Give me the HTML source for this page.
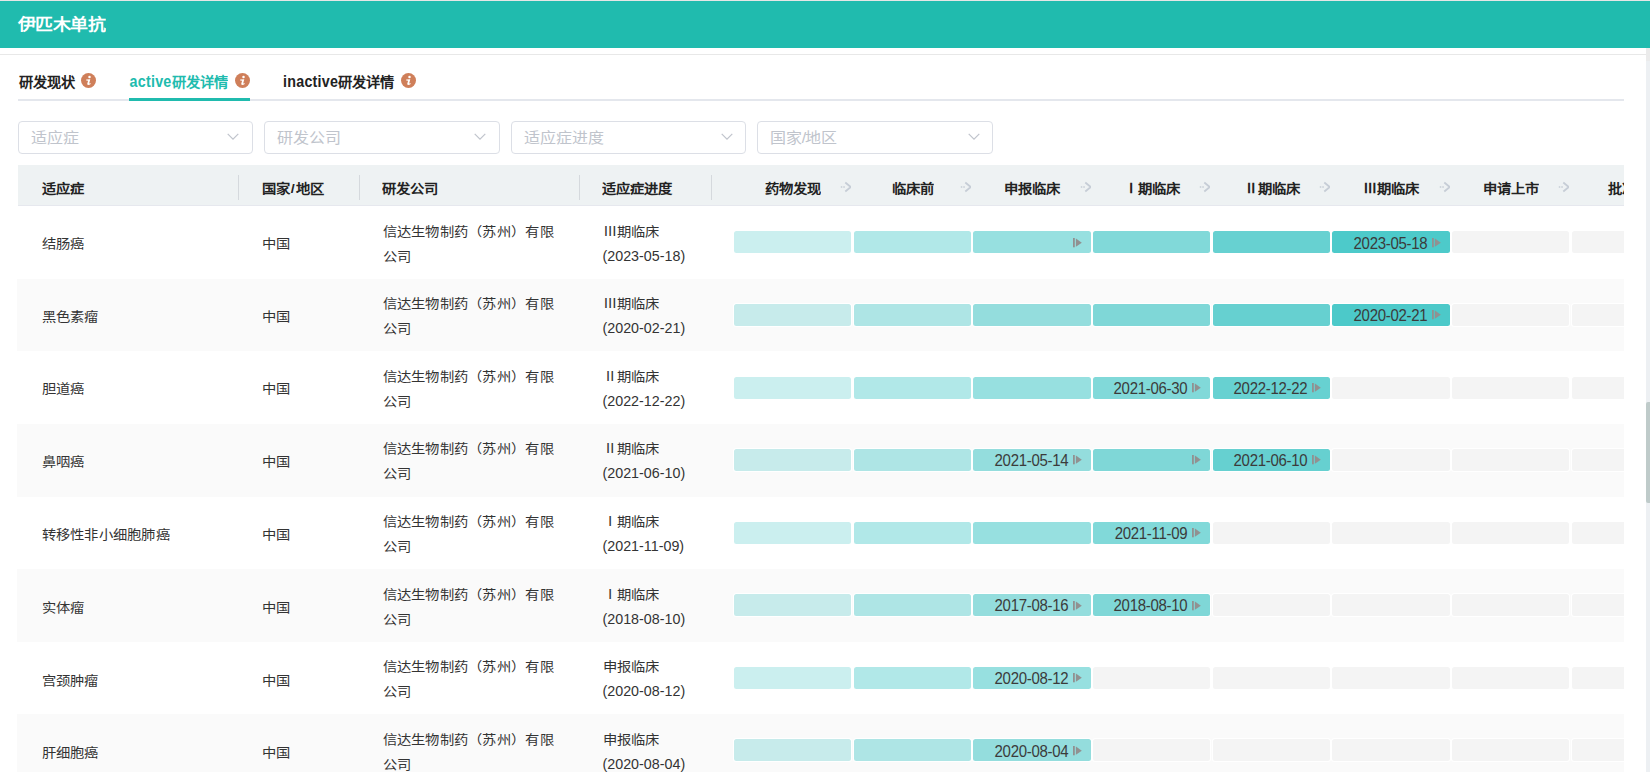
<!DOCTYPE html><html lang="zh-CN"><head><meta charset="utf-8"><style>*{box-sizing:border-box}
html,body{margin:0;padding:0;background:#fff;width:1650px;height:772px;overflow:hidden;font-family:"Liberation Sans",sans-serif;color:#333}
.topline{position:absolute;left:0;top:0;width:1650px;height:1px;background:#e6e6e6}
.hdr{position:absolute;left:0;top:1px;width:1650px;height:47px;background:#20bbae;color:#fff;font-weight:bold;font-size:18px}
.hdr span{position:absolute;left:17.8px;top:14px;line-height:20px;letter-spacing:-0.5px}
.l54{position:absolute;left:0;top:54px;width:1646px;height:1px;background:#e8e8e8}
.tabline{position:absolute;left:18px;top:99px;width:1606px;height:2px;background:#e4e7ed}
.tabact{position:absolute;left:129px;top:98px;width:121px;height:3px;background:#20bbae}
.tab{position:absolute;top:73.2px;font-size:14.3px;line-height:18px;font-weight:bold;color:#222;white-space:nowrap}
.tab b{font-weight:bold;letter-spacing:0.25px}
.t1{left:18.5px}.t2{left:129.5px;color:#20bbae}.t3{left:283px}
.info{position:absolute;top:72.9px}
.sel{position:absolute;top:121px;height:32.5px;border:1px solid #dcdfe6;border-radius:4px;background:#fff}
.sel span{position:absolute;left:12px;top:5.5px;font-size:16px;line-height:20px;color:#c0c4cc;white-space:nowrap}
.sl{font-style:normal;margin:0 1.3px}
.sel .sl{margin:0 -1px 0 -0.5px}
.sel .chev{position:absolute;right:12.5px;top:10.8px}
.tbl{position:absolute;left:17px;top:165px;width:1607px;height:607px;overflow:hidden}
.th{position:absolute;left:1px;top:0;width:1606px;height:41px;background:#eef2f3;border-bottom:1px solid #e6e8ee}
.hc{position:absolute;top:14.9px;font-size:14.3px;line-height:18px;font-weight:bold;color:#222;white-space:nowrap}
.dv{position:absolute;top:10px;width:1px;height:25px;background:#d5d9dd}
.gh{position:absolute;top:14.9px;height:18px;text-align:center;font-size:14.3px;line-height:18px;font-weight:bold;color:#222;white-space:nowrap}
.gh .arr{position:absolute;right:0;top:0.9px}
.row{position:absolute;left:0;width:1607px;height:72.57px;background:#fff}
.row.alt{background:#fafafa}
.c1,.c2{position:absolute;top:28.9px;font-size:14.3px;line-height:18px;white-space:nowrap}
.c1{left:24.5px;letter-spacing:0.28px}.c2{left:244.5px}
.c3,.c4{position:absolute;top:12.4px;font-size:14.3px;line-height:25px;white-space:nowrap}
.c3{left:365.5px;letter-spacing:0.28px}.c4{left:585.5px}
.bar{position:absolute;top:25.1px;height:22px;border-radius:2.5px;box-shadow:0 0 0 1px #fff;text-align:right;padding-right:22.7px;white-space:nowrap}
.b0{background:rgba(38,190,190,0.24)}
.b1{background:rgba(38,190,190,0.36)}
.b2{background:rgba(38,190,190,0.48)}
.b3{background:rgba(38,190,190,0.58)}
.b4{background:rgba(38,190,190,0.70)}
.b5{background:rgba(38,190,190,0.82)}
.be{background:#f4f4f4}
.dt{font-size:15px;line-height:22px;color:#3b3b3b;letter-spacing:-0.3px}
.play{position:absolute;right:8.8px;top:6.3px}
.sbtrack{position:absolute;left:1646px;top:48px;width:4px;height:724px;background:#edf0f3}
.sbtop{position:absolute;left:1646px;top:48px;width:4px;height:13px;background:#ebebeb}
.sbthumb{position:absolute;left:1646px;top:402px;width:4px;height:101px;border-radius:2px 0 0 2px;background:#bfcbca}

.sy{transform:scaleY(0.9)}
.hdr span,.tab,.sel span,.hc,.gh span,.c1,.c2,.c3>div,.c4>div:first-child{transform:scaleY(0.9)}
.gh span,.dt{display:inline-block}
.c4>div:last-child,.dt{transform:scaleY(1.07)}
.dt{display:inline-block;position:relative;top:1.2px}
.tab{transform:scaleY(0.93)}
.tab b{display:inline-block;transform:scaleY(1.2);position:relative;top:-1px}
</style></head><body>
<div class="topline"></div><div class="hdr"><span>伊匹木单抗</span></div><div class="l54"></div>
<div class="tabline"></div><div class="tabact"></div>
<div class="tab t1">研发现状</div><svg class="info" style="left:81px" width="15" height="15" viewBox="0 0 15 15"><circle cx="7.5" cy="7.5" r="7.5" fill="#cf7f5a"/><circle cx="8.5" cy="3.95" r="1.25" fill="#fff"/><path d="M5.2 6.6 L9.3 6.3 L8.2 10.2 Q8.1 10.9 9.7 10.1 L9.4 11.2 Q8.5 12 7.2 12 Q5.9 12 6.3 10.6 L7.1 7.7 Q6.4 7.5 5.2 7.5 Z" fill="#fff"/></svg>
<div class="tab t2"><b>active</b>研发详情</div><svg class="info" style="left:234.5px" width="15" height="15" viewBox="0 0 15 15"><circle cx="7.5" cy="7.5" r="7.5" fill="#cf7f5a"/><circle cx="8.5" cy="3.95" r="1.25" fill="#fff"/><path d="M5.2 6.6 L9.3 6.3 L8.2 10.2 Q8.1 10.9 9.7 10.1 L9.4 11.2 Q8.5 12 7.2 12 Q5.9 12 6.3 10.6 L7.1 7.7 Q6.4 7.5 5.2 7.5 Z" fill="#fff"/></svg>
<div class="tab t3"><b>inactive</b>研发详情</div><svg class="info" style="left:400.5px" width="15" height="15" viewBox="0 0 15 15"><circle cx="7.5" cy="7.5" r="7.5" fill="#cf7f5a"/><circle cx="8.5" cy="3.95" r="1.25" fill="#fff"/><path d="M5.2 6.6 L9.3 6.3 L8.2 10.2 Q8.1 10.9 9.7 10.1 L9.4 11.2 Q8.5 12 7.2 12 Q5.9 12 6.3 10.6 L7.1 7.7 Q6.4 7.5 5.2 7.5 Z" fill="#fff"/></svg>
<div class="sel" style="left:18.2px;width:234.5px"><span>适应症</span><svg class="chev" width="12" height="8" viewBox="0 0 12 8"><path d="M0.7 0.8 L6 6.2 L11.3 0.8" fill="none" stroke="#c0c4cc" stroke-width="1.2"/></svg></div>
<div class="sel" style="left:264.2px;width:235.5px"><span>研发公司</span><svg class="chev" width="12" height="8" viewBox="0 0 12 8"><path d="M0.7 0.8 L6 6.2 L11.3 0.8" fill="none" stroke="#c0c4cc" stroke-width="1.2"/></svg></div>
<div class="sel" style="left:510.8px;width:235.5px"><span>适应症进度</span><svg class="chev" width="12" height="8" viewBox="0 0 12 8"><path d="M0.7 0.8 L6 6.2 L11.3 0.8" fill="none" stroke="#c0c4cc" stroke-width="1.2"/></svg></div>
<div class="sel" style="left:757.2px;width:236px"><span>国家<i class="sl">/</i>地区</span><svg class="chev" width="12" height="8" viewBox="0 0 12 8"><path d="M0.7 0.8 L6 6.2 L11.3 0.8" fill="none" stroke="#c0c4cc" stroke-width="1.2"/></svg></div>
<div class="tbl">
<div class="th">
<div class="hc" style="left:23.5px">适应症</div><div class="dv" style="left:219.6px"></div>
<div class="hc" style="left:243.5px">国家<i class="sl">/</i>地区</div><div class="dv" style="left:340.6px"></div>
<div class="hc" style="left:364px">研发公司</div><div class="dv" style="left:560.8px"></div>
<div class="hc" style="left:584px">适应症进度</div><div class="dv" style="left:692.8px"></div>
<div class="gh" style="left:716.00px;width:117px;"><span>药物发现</span><svg class="arr" width="12" height="12" viewBox="0 0 12 12"><path d="M6.3 1.5 L11.8 6 L6.3 10.5" fill="none" stroke="#c6cdd6" stroke-width="1.8"/><path d="M1.8 6 H3.3 M4.3 6 H5.8" fill="none" stroke="#c6cdd6" stroke-width="1.6"/></svg></div>
<div class="gh" style="left:836.00px;width:117px;"><span>临床前</span><svg class="arr" width="12" height="12" viewBox="0 0 12 12"><path d="M6.3 1.5 L11.8 6 L6.3 10.5" fill="none" stroke="#c6cdd6" stroke-width="1.8"/><path d="M1.8 6 H3.3 M4.3 6 H5.8" fill="none" stroke="#c6cdd6" stroke-width="1.6"/></svg></div>
<div class="gh" style="left:955.00px;width:118px;"><span>申报临床</span><svg class="arr" width="12" height="12" viewBox="0 0 12 12"><path d="M6.3 1.5 L11.8 6 L6.3 10.5" fill="none" stroke="#c6cdd6" stroke-width="1.8"/><path d="M1.8 6 H3.3 M4.3 6 H5.8" fill="none" stroke="#c6cdd6" stroke-width="1.6"/></svg></div>
<div class="gh" style="left:1075.00px;width:117px;"><span>Ⅰ期临床</span><svg class="arr" width="12" height="12" viewBox="0 0 12 12"><path d="M6.3 1.5 L11.8 6 L6.3 10.5" fill="none" stroke="#c6cdd6" stroke-width="1.8"/><path d="M1.8 6 H3.3 M4.3 6 H5.8" fill="none" stroke="#c6cdd6" stroke-width="1.6"/></svg></div>
<div class="gh" style="left:1195.00px;width:117px;"><span>Ⅱ期临床</span><svg class="arr" width="12" height="12" viewBox="0 0 12 12"><path d="M6.3 1.5 L11.8 6 L6.3 10.5" fill="none" stroke="#c6cdd6" stroke-width="1.8"/><path d="M1.8 6 H3.3 M4.3 6 H5.8" fill="none" stroke="#c6cdd6" stroke-width="1.6"/></svg></div>
<div class="gh" style="left:1314.00px;width:118px;"><span>Ⅲ期临床</span><svg class="arr" width="12" height="12" viewBox="0 0 12 12"><path d="M6.3 1.5 L11.8 6 L6.3 10.5" fill="none" stroke="#c6cdd6" stroke-width="1.8"/><path d="M1.8 6 H3.3 M4.3 6 H5.8" fill="none" stroke="#c6cdd6" stroke-width="1.6"/></svg></div>
<div class="gh" style="left:1434.00px;width:117px;"><span>申请上市</span><svg class="arr" width="12" height="12" viewBox="0 0 12 12"><path d="M6.3 1.5 L11.8 6 L6.3 10.5" fill="none" stroke="#c6cdd6" stroke-width="1.8"/><path d="M1.8 6 H3.3 M4.3 6 H5.8" fill="none" stroke="#c6cdd6" stroke-width="1.6"/></svg></div>
<div class="gh" style="left:1554.00px;width:117px;padding-left:10px;"><span>批准上市</span><svg class="arr" width="12" height="12" viewBox="0 0 12 12"><path d="M6.3 1.5 L11.8 6 L6.3 10.5" fill="none" stroke="#c6cdd6" stroke-width="1.8"/><path d="M1.8 6 H3.3 M4.3 6 H5.8" fill="none" stroke="#c6cdd6" stroke-width="1.6"/></svg></div>
<div class="gh" style="left:1673.00px;width:117px;"><span>上市</span><svg class="arr" width="12" height="12" viewBox="0 0 12 12"><path d="M6.3 1.5 L11.8 6 L6.3 10.5" fill="none" stroke="#c6cdd6" stroke-width="1.8"/><path d="M1.8 6 H3.3 M4.3 6 H5.8" fill="none" stroke="#c6cdd6" stroke-width="1.6"/></svg></div>
</div>
<div class="row" style="top:41.30px">
<div class="c1">结肠癌</div><div class="c2">中国</div>
<div class="c3"><div>信达生物制药（苏州）有限</div><div>公司</div></div>
<div class="c4"><div>Ⅲ期临床</div><div>(2023-05-18)</div></div>
<div class="bar b0" style="left:717.00px;width:117px"></div>
<div class="bar b1" style="left:837.00px;width:117px"></div>
<div class="bar b2" style="left:956.00px;width:118px"><span class="dt"></span><svg class="play" width="9" height="10" viewBox="0 0 9 10"><rect x="0" y="0" width="1.8" height="9.3" fill="#919191"/><path d="M2.9 0.5 L8.8 4.65 L2.9 8.8 Z" fill="#919191"/></svg></div>
<div class="bar b3" style="left:1076.00px;width:117px"></div>
<div class="bar b4" style="left:1196.00px;width:117px"></div>
<div class="bar b5" style="left:1315.00px;width:118px"><span class="dt">2023-05-18</span><svg class="play" width="9" height="10" viewBox="0 0 9 10"><rect x="0" y="0" width="1.8" height="9.3" fill="#919191"/><path d="M2.9 0.5 L8.8 4.65 L2.9 8.8 Z" fill="#919191"/></svg></div>
<div class="bar be" style="left:1435.00px;width:117px"></div>
<div class="bar be" style="left:1555.00px;width:117px"></div>
<div class="bar be" style="left:1674.00px;width:117px"></div>
</div>
<div class="row alt" style="top:113.87px">
<div class="c1">黑色素瘤</div><div class="c2">中国</div>
<div class="c3"><div>信达生物制药（苏州）有限</div><div>公司</div></div>
<div class="c4"><div>Ⅲ期临床</div><div>(2020-02-21)</div></div>
<div class="bar b0" style="left:717.00px;width:117px"></div>
<div class="bar b1" style="left:837.00px;width:117px"></div>
<div class="bar b2" style="left:956.00px;width:118px"></div>
<div class="bar b3" style="left:1076.00px;width:117px"></div>
<div class="bar b4" style="left:1196.00px;width:117px"></div>
<div class="bar b5" style="left:1315.00px;width:118px"><span class="dt">2020-02-21</span><svg class="play" width="9" height="10" viewBox="0 0 9 10"><rect x="0" y="0" width="1.8" height="9.3" fill="#919191"/><path d="M2.9 0.5 L8.8 4.65 L2.9 8.8 Z" fill="#919191"/></svg></div>
<div class="bar be" style="left:1435.00px;width:117px"></div>
<div class="bar be" style="left:1555.00px;width:117px"></div>
<div class="bar be" style="left:1674.00px;width:117px"></div>
</div>
<div class="row" style="top:186.44px">
<div class="c1">胆道癌</div><div class="c2">中国</div>
<div class="c3"><div>信达生物制药（苏州）有限</div><div>公司</div></div>
<div class="c4"><div>Ⅱ期临床</div><div>(2022-12-22)</div></div>
<div class="bar b0" style="left:717.00px;width:117px"></div>
<div class="bar b1" style="left:837.00px;width:117px"></div>
<div class="bar b2" style="left:956.00px;width:118px"></div>
<div class="bar b3" style="left:1076.00px;width:117px"><span class="dt">2021-06-30</span><svg class="play" width="9" height="10" viewBox="0 0 9 10"><rect x="0" y="0" width="1.8" height="9.3" fill="#919191"/><path d="M2.9 0.5 L8.8 4.65 L2.9 8.8 Z" fill="#919191"/></svg></div>
<div class="bar b4" style="left:1196.00px;width:117px"><span class="dt">2022-12-22</span><svg class="play" width="9" height="10" viewBox="0 0 9 10"><rect x="0" y="0" width="1.8" height="9.3" fill="#919191"/><path d="M2.9 0.5 L8.8 4.65 L2.9 8.8 Z" fill="#919191"/></svg></div>
<div class="bar be" style="left:1315.00px;width:118px"></div>
<div class="bar be" style="left:1435.00px;width:117px"></div>
<div class="bar be" style="left:1555.00px;width:117px"></div>
<div class="bar be" style="left:1674.00px;width:117px"></div>
</div>
<div class="row alt" style="top:259.01px">
<div class="c1">鼻咽癌</div><div class="c2">中国</div>
<div class="c3"><div>信达生物制药（苏州）有限</div><div>公司</div></div>
<div class="c4"><div>Ⅱ期临床</div><div>(2021-06-10)</div></div>
<div class="bar b0" style="left:717.00px;width:117px"></div>
<div class="bar b1" style="left:837.00px;width:117px"></div>
<div class="bar b2" style="left:956.00px;width:118px"><span class="dt">2021-05-14</span><svg class="play" width="9" height="10" viewBox="0 0 9 10"><rect x="0" y="0" width="1.8" height="9.3" fill="#919191"/><path d="M2.9 0.5 L8.8 4.65 L2.9 8.8 Z" fill="#919191"/></svg></div>
<div class="bar b3" style="left:1076.00px;width:117px"><span class="dt"></span><svg class="play" width="9" height="10" viewBox="0 0 9 10"><rect x="0" y="0" width="1.8" height="9.3" fill="#919191"/><path d="M2.9 0.5 L8.8 4.65 L2.9 8.8 Z" fill="#919191"/></svg></div>
<div class="bar b4" style="left:1196.00px;width:117px"><span class="dt">2021-06-10</span><svg class="play" width="9" height="10" viewBox="0 0 9 10"><rect x="0" y="0" width="1.8" height="9.3" fill="#919191"/><path d="M2.9 0.5 L8.8 4.65 L2.9 8.8 Z" fill="#919191"/></svg></div>
<div class="bar be" style="left:1315.00px;width:118px"></div>
<div class="bar be" style="left:1435.00px;width:117px"></div>
<div class="bar be" style="left:1555.00px;width:117px"></div>
<div class="bar be" style="left:1674.00px;width:117px"></div>
</div>
<div class="row" style="top:331.58px">
<div class="c1">转移性非小细胞肺癌</div><div class="c2">中国</div>
<div class="c3"><div>信达生物制药（苏州）有限</div><div>公司</div></div>
<div class="c4"><div>Ⅰ期临床</div><div>(2021-11-09)</div></div>
<div class="bar b0" style="left:717.00px;width:117px"></div>
<div class="bar b1" style="left:837.00px;width:117px"></div>
<div class="bar b2" style="left:956.00px;width:118px"></div>
<div class="bar b3" style="left:1076.00px;width:117px"><span class="dt">2021-11-09</span><svg class="play" width="9" height="10" viewBox="0 0 9 10"><rect x="0" y="0" width="1.8" height="9.3" fill="#919191"/><path d="M2.9 0.5 L8.8 4.65 L2.9 8.8 Z" fill="#919191"/></svg></div>
<div class="bar be" style="left:1196.00px;width:117px"></div>
<div class="bar be" style="left:1315.00px;width:118px"></div>
<div class="bar be" style="left:1435.00px;width:117px"></div>
<div class="bar be" style="left:1555.00px;width:117px"></div>
<div class="bar be" style="left:1674.00px;width:117px"></div>
</div>
<div class="row alt" style="top:404.15px">
<div class="c1">实体瘤</div><div class="c2">中国</div>
<div class="c3"><div>信达生物制药（苏州）有限</div><div>公司</div></div>
<div class="c4"><div>Ⅰ期临床</div><div>(2018-08-10)</div></div>
<div class="bar b0" style="left:717.00px;width:117px"></div>
<div class="bar b1" style="left:837.00px;width:117px"></div>
<div class="bar b2" style="left:956.00px;width:118px"><span class="dt">2017-08-16</span><svg class="play" width="9" height="10" viewBox="0 0 9 10"><rect x="0" y="0" width="1.8" height="9.3" fill="#919191"/><path d="M2.9 0.5 L8.8 4.65 L2.9 8.8 Z" fill="#919191"/></svg></div>
<div class="bar b3" style="left:1076.00px;width:117px"><span class="dt">2018-08-10</span><svg class="play" width="9" height="10" viewBox="0 0 9 10"><rect x="0" y="0" width="1.8" height="9.3" fill="#919191"/><path d="M2.9 0.5 L8.8 4.65 L2.9 8.8 Z" fill="#919191"/></svg></div>
<div class="bar be" style="left:1196.00px;width:117px"></div>
<div class="bar be" style="left:1315.00px;width:118px"></div>
<div class="bar be" style="left:1435.00px;width:117px"></div>
<div class="bar be" style="left:1555.00px;width:117px"></div>
<div class="bar be" style="left:1674.00px;width:117px"></div>
</div>
<div class="row" style="top:476.72px">
<div class="c1">宫颈肿瘤</div><div class="c2">中国</div>
<div class="c3"><div>信达生物制药（苏州）有限</div><div>公司</div></div>
<div class="c4"><div>申报临床</div><div>(2020-08-12)</div></div>
<div class="bar b0" style="left:717.00px;width:117px"></div>
<div class="bar b1" style="left:837.00px;width:117px"></div>
<div class="bar b2" style="left:956.00px;width:118px"><span class="dt">2020-08-12</span><svg class="play" width="9" height="10" viewBox="0 0 9 10"><rect x="0" y="0" width="1.8" height="9.3" fill="#919191"/><path d="M2.9 0.5 L8.8 4.65 L2.9 8.8 Z" fill="#919191"/></svg></div>
<div class="bar be" style="left:1076.00px;width:117px"></div>
<div class="bar be" style="left:1196.00px;width:117px"></div>
<div class="bar be" style="left:1315.00px;width:118px"></div>
<div class="bar be" style="left:1435.00px;width:117px"></div>
<div class="bar be" style="left:1555.00px;width:117px"></div>
<div class="bar be" style="left:1674.00px;width:117px"></div>
</div>
<div class="row alt" style="top:549.29px">
<div class="c1">肝细胞癌</div><div class="c2">中国</div>
<div class="c3"><div>信达生物制药（苏州）有限</div><div>公司</div></div>
<div class="c4"><div>申报临床</div><div>(2020-08-04)</div></div>
<div class="bar b0" style="left:717.00px;width:117px"></div>
<div class="bar b1" style="left:837.00px;width:117px"></div>
<div class="bar b2" style="left:956.00px;width:118px"><span class="dt">2020-08-04</span><svg class="play" width="9" height="10" viewBox="0 0 9 10"><rect x="0" y="0" width="1.8" height="9.3" fill="#919191"/><path d="M2.9 0.5 L8.8 4.65 L2.9 8.8 Z" fill="#919191"/></svg></div>
<div class="bar be" style="left:1076.00px;width:117px"></div>
<div class="bar be" style="left:1196.00px;width:117px"></div>
<div class="bar be" style="left:1315.00px;width:118px"></div>
<div class="bar be" style="left:1435.00px;width:117px"></div>
<div class="bar be" style="left:1555.00px;width:117px"></div>
<div class="bar be" style="left:1674.00px;width:117px"></div>
</div>
</div>
<div class="sbtrack"></div><div class="sbtop"></div><div class="sbthumb"></div>
</body></html>
